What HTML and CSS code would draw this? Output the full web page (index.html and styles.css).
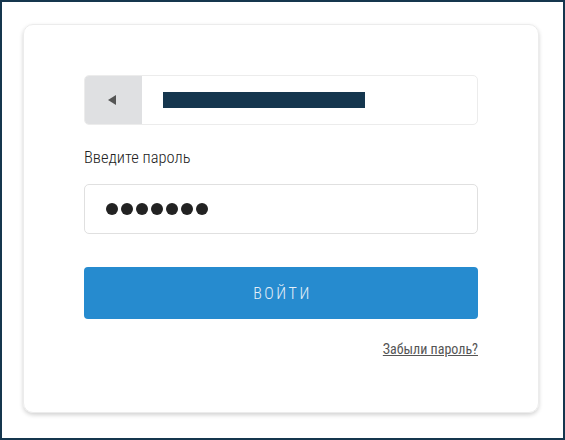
FILE: index.html
```html
<!DOCTYPE html>
<html lang="ru">
<head>
<meta charset="utf-8">
<link rel="stylesheet" href="styles.css">
</head>
<body>
<div class="frame">
  <div class="card">
    <div class="user-field">
      <div class="back"><svg width="8" height="10" viewBox="0 0 8 10"><polygon points="8,0 8,10 0,5" fill="#555"/></svg></div>
      <div class="user-value"><span class="mask"></span></div>
    </div>
    <label class="label">Введите пароль</label>
    <div class="pass-field">
      <span class="dot"></span><span class="dot"></span><span class="dot"></span><span class="dot"></span><span class="dot"></span><span class="dot"></span><span class="dot"></span>
    </div>
    <button class="submit">ВОЙТИ</button>
    <div class="links"><a class="forgot" href="#">Забыли пароль?</a></div>
  </div>
</div>
</body>
</html>
```
FILE: styles.css
```css
html, body { margin: 0; padding: 0; }
body { font-family: "Roboto Condensed", "DejaVu Sans Condensed", Roboto, sans-serif; font-stretch: condensed; background: #fff; }
.frame {
  box-sizing: border-box;
  width: 565px;
  height: 440px;
  border: 2px solid #15364e;
  padding: 22px 24px 0 21px;
}
.card {
  box-sizing: border-box;
  width: 516px;
  height: 389px;
  border: 1px solid #ececec;
  border-radius: 10px;
  box-shadow: 0 2px 4px rgba(0,0,0,0.18);
  padding: 50px 60px 0 60px;
  display: flex;
  flex-direction: column;
}
.user-field {
  display: flex;
  height: 50px;
  box-sizing: border-box;
  border: 1px solid #ececec;
  border-radius: 5px;
  overflow: hidden;
}
.back {
  width: 58px;
  margin: -1px 0 -1px -1px;
  background: #dfe0e2;
  display: flex;
  align-items: center;
  justify-content: center;
  box-sizing: border-box;
}
.back svg { margin-left: -2px; }
.user-value { flex: 1; display: flex; align-items: center; padding-left: 21px; }
.mask { display: block; width: 202px; height: 16px; background: #15364e; }
.label {
  margin-top: 23px;
  font-size: 16.5px;
  font-weight: 300;
  line-height: 20px;
  color: #222;
}
.pass-field {
  margin-top: 16px;
  box-sizing: border-box;
  height: 50px;
  border: 1px solid #e0e0e0;
  border-radius: 5px;
  display: flex;
  align-items: center;
  padding-left: 21px;
  gap: 3px;
}
.dot { width: 12px; height: 12px; border-radius: 50%; background: #222; }
.submit {
  margin-top: 33px;
  height: 52px;
  border: 0;
  border-radius: 4px;
  background: #268bcf;
  color: #e6f0f8;
  font-family: inherit;
  font-stretch: condensed;
  font-size: 16px;
  font-weight: 300;
  letter-spacing: 2.5px;
  padding: 0 0 0 3px;
}
.links { display: flex; justify-content: flex-end; margin-top: 21px; }
.forgot { color: #555; font-size: 14px; line-height: 18px; text-decoration: underline; }
```
